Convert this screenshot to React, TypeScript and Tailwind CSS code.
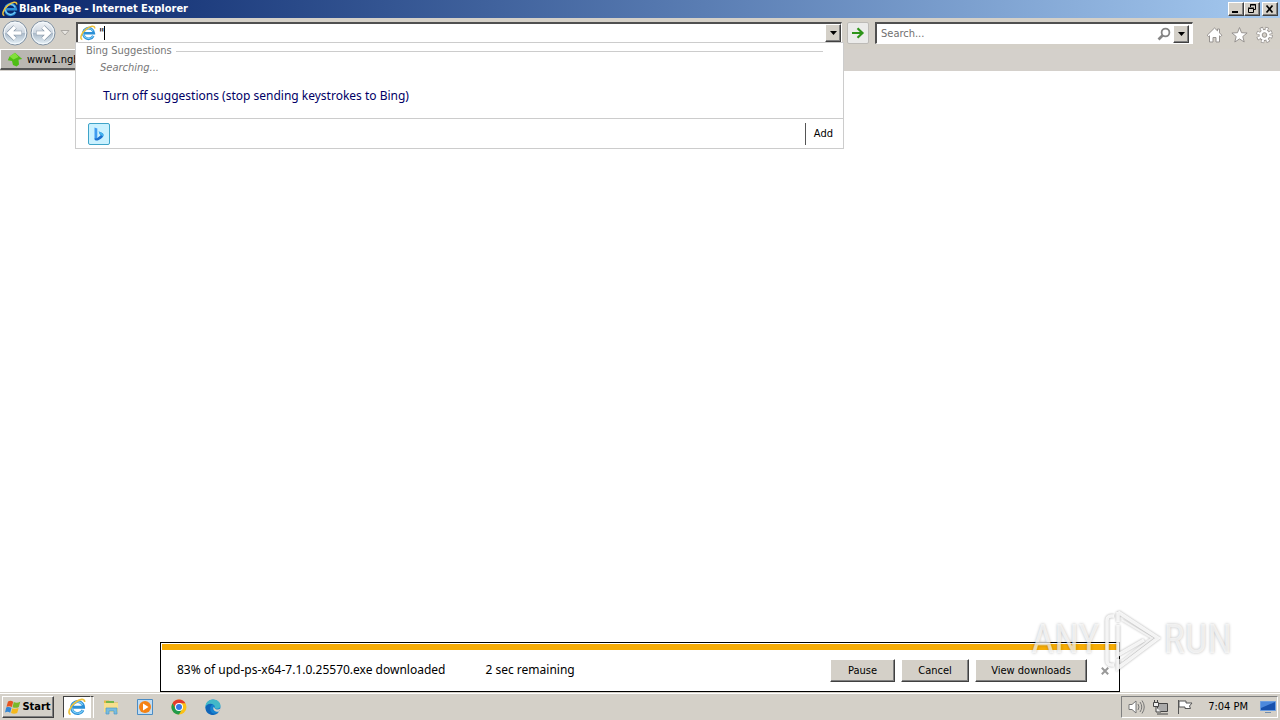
import React from "react";

function IeIcon({ className }: { className: string }) {
  return (
    <svg viewBox="0 0 18 18" className={className} aria-hidden="true">
      <path d="M15 12.200A6 6 0 1 1 15.600 9.300H5.200" fill="none" stroke="#2b8fd6" strokeWidth="2.900" />
      <path d="M14.800 12.400A5.900 5.900 0 0 1 3.900 9.600M4.200 7.600a5.900 5.900 0 0 1 10.600-.6" fill="none" stroke="#7fd0f8" strokeWidth="1.200" />
      <path d="M2.600 16.400C-1 15.600 2 8.500 7 4.600 11.500 1 16.800-.2 16.600 4" fill="none" stroke="#edc13b" strokeWidth="1.700" />
    </svg>
  );
}

function NavCircle({ back }: { back?: boolean }) {
  return (
    <svg viewBox="0 0 26 26" className="size-[26px]" aria-hidden="true">
      <defs>
        <linearGradient id={back ? "nb" : "nf"} x1="0" y1="0" x2="0" y2="1">
          <stop offset="0" stopColor="#f4f6f9" />
          <stop offset=".48" stopColor="#cdd6e0" />
          <stop offset=".52" stopColor="#abbac9" />
          <stop offset="1" stopColor="#eaf5fb" />
        </linearGradient>
      </defs>
      <circle cx="13" cy="13" r="12" fill={back ? "url(#nb)" : "url(#nf)"} stroke="#8393a3" />
      <circle cx="13" cy="13" r="10.800" fill="none" stroke="#f5fafd" strokeWidth="1" />
      <g transform={back ? undefined : "matrix(-1 0 0 1 26 0)"}>
        <path d="M13 7 7 13l6 6M8 13h12" fill="none" stroke="#8494a5" strokeWidth="4.600" strokeLinejoin="round" />
        <path d="M13 7 7 13l6 6M8 13h11.500" fill="none" stroke="#fff" strokeWidth="3.400" />
      </g>
    </svg>
  );
}

function Caret() {
  return (
    <svg viewBox="0 0 7 4" className="h-1 w-[7px]" aria-hidden="true">
      <path d="M0 0h7L3.500 4z" fill="#000" />
    </svg>
  );
}

const raised =
  "flex shrink-0 items-center justify-center border border-t-white border-l-white border-r-[#404040] border-b-[#404040] bg-[#d4d0c8] shadow-[inset_-1px_-1px_0_#808080]";

function TitleBar() {
  return (
    <header className="flex h-[18px] items-center bg-linear-to-r from-[#0a246a] to-[#a6caf0] pr-0.5 pl-0.5">
      <IeIcon className="size-4" />
      <h1 className="ml-px flex-1 text-[11px] leading-[16px] font-bold text-white">Blank Page - Internet Explorer</h1>
      <div className="flex">
        <button aria-label="Minimize" className={`${raised} h-3.5 w-4`}>
          <svg viewBox="0 0 12 10" className="h-2.5 w-3"><path d="M2 7h6v2H2z" /></svg>
        </button>
        <button aria-label="Restore" className={`${raised} h-3.5 w-4`}>
          <svg viewBox="0 0 12 10" className="h-2.5 w-3">
            <path d="M4.500 3V.5h5v5H8M4 1h6M2.500 4.500h5v4h-5zM2 4h6" fill="none" stroke="#000" />
          </svg>
        </button>
        <button aria-label="Close" className={`${raised} ml-0.5 h-3.5 w-4`}>
          <svg viewBox="0 0 12 10" className="h-2.5 w-3"><path d="m2.500 1.500 6 7m0-7-6 7" stroke="#000" strokeWidth="1.700" /></svg>
        </button>
      </div>
    </header>
  );
}

function Suggestions() {
  return (
    <div className="absolute top-5 -right-0.5 -left-px z-10 border border-[#ccc] bg-white">
      <div className="flex h-[17px] items-center gap-1 pr-5 pl-2.5 text-[11px] text-[#777]">
        <span>Bing Suggestions</span>
        <span className="h-px flex-1 bg-[#ccc]" />
      </div>
      <p className="pl-6 text-[11px] leading-[16px] text-[#777] italic">Searching...</p>
      <a href="#suggestions" className="mt-[11px] mb-[13px] ml-[27px] block font-['Noto_Sans',sans-serif] text-[12px] leading-[18px] text-[#000066]">
        Turn off suggestions (stop sending keystrokes to Bing)
      </a>
      <div className="flex h-[30px] items-center border-t border-[#ccc] pl-3">
        <button aria-label="Bing" className="flex size-[22px] items-center justify-center rounded-xs border border-[#3fa4c9] bg-[#caf1ff]">
          <svg viewBox="0 0 16 16" className="size-4">
            <path d="M3.500 1.500 6.300 2.500v9.500l-2.800 1.500z" fill="#3f9bf0" />
            <path d="M3.500 12.500c0 2.200 2.200 2.500 4.300 1.400 3.400-1.700 4.700-2.900 4.700-4.900 0-1.700-2-2.600-4.800-3.500L8.800 8.300l.9.900-3.400 2.800z" fill="#1b70d0" />
            <path d="M7.700 5.500c2.800.9 4.800 1.800 4.800 3.500 0 .6-.2 1.200-.5 1.600L8.800 8.300z" fill="#42b4f0" />
          </svg>
        </button>
        <button className="ml-auto h-[22px] border-l border-[#555] pt-0.5 pr-2.5 pl-2 text-[11px]">Add</button>
      </div>
    </div>
  );
}

const field = "flex items-center border-t-2 border-l-2 border-[#505050] border-r border-b border-r-white border-b-white bg-white";

function NavBar() {
  return (
    <div className="flex h-[31px] items-start bg-[#d4d0c8] pr-[7px]">
      <div className="flex w-[76px] shrink-0 items-center gap-0.5 pt-0.5 pl-0.5">
        <button aria-label="Back"><NavCircle back /></button>
        <button aria-label="Forward"><NavCircle /></button>
        <button aria-label="Recent pages" className="ml-0.5">
          <svg viewBox="0 0 10 6" className="h-1.5 w-2.5"><path d="M1 .5h8L5 5z" fill="#e8e6e2" stroke="#aaa7a2" /></svg>
        </button>
      </div>
      <div className="relative mt-1 min-w-0 flex-1">
        <div className={`${field} h-[21px]`}>
          <IeIcon className="ml-0.5 size-4 shrink-0" />
          <input aria-label="Address" defaultValue={'"'} className="ml-[3px] w-[5px] bg-transparent text-[13px] outline-none" />
          <span className="h-3.5 w-px bg-black" />
          <button aria-label="Show address list" className={`${raised} ml-auto h-[18px] w-4`}><Caret /></button>
        </div>
        <Suggestions />
      </div>
      <button aria-label="Go" className="mt-1 ml-[5px] flex size-[22px] shrink-0 items-center justify-center rounded-xs border border-[#bdbbb7] bg-[#ebebea]">
        <svg viewBox="0 0 14 12" className="h-3 w-3.5"><path d="M1 6h10M6.500 1.200 11.500 6l-5 4.800" fill="none" stroke="#2d9419" strokeWidth="2.200" /></svg>
      </button>
      <div className={`${field} mt-1 ml-1.5 h-[22px] w-[318px] shrink-0 pr-[3px]`}>
        <input aria-label="Search" placeholder="Search..." className="ml-1 min-w-0 flex-1 pt-0.5 text-[11px] outline-none placeholder:text-[#707070]" />
        <button aria-label="Search the web">
          <svg viewBox="0 0 14 14" className="size-3.5"><path d="m1.500 12.500 4-4" stroke="#858585" strokeWidth="2.600" /><circle cx="8.500" cy="5.500" r="3.900" fill="#fff" stroke="#858585" strokeWidth="1.800" /></svg>
        </button>
        <button aria-label="Search providers" className={`${raised} ml-0.5 h-[18px] w-4`}><Caret /></button>
      </div>
      <div className="mt-2 ml-[13px] flex shrink-0 gap-2">
        <button aria-label="Home">
          <svg viewBox="0 0 17 18" className="h-[18px] w-[17px]"><path d="M8.500 2 1.200 9.200l1.300 1.400 1-.8V16H7v-4.500h3V16h3.500V9.800l1 .8 1.300-1.400-2.300-2.300V3h-2v1.900z" fill="#fff" stroke="#979390" /></svg>
        </button>
        <button aria-label="Favorites">
          <svg viewBox="0 0 17 18" className="h-[18px] w-[17px]"><path d="m8.500 1.500 2 5.200 5.600.3-4.300 3.500 1.400 5.500-4.700-3.100L3.800 16l1.400-5.500L.9 7l5.600-.3z" fill="#fff" stroke="#979390" /></svg>
        </button>
        <button aria-label="Tools">
          <svg viewBox="0 0 17 18" className="h-[18px] w-[17px]">
            <circle cx="8.500" cy="9" r="6.200" fill="none" stroke="#979390" strokeWidth="4.200" strokeDasharray="2.870 2" />
            <circle cx="8.500" cy="9" r="5.900" fill="#979390" />
            <circle cx="8.500" cy="9" r="6" fill="none" stroke="#fff" strokeWidth="3" strokeDasharray="1.900 2.812" strokeDashoffset="-.450" />
            <circle cx="8.500" cy="9" r="5" fill="#fff" />
            <circle cx="8.500" cy="9" r="2.300" fill="#d4d0c8" stroke="#979390" />
          </svg>
        </button>
      </div>
    </div>
  );
}

function TabRow() {
  return (
    <nav className="flex h-[22px] items-start bg-[#d4d0cb]">
      <button className="flex h-[21px] w-[200px] items-center border-t border-b-2 border-l border-t-white border-b-[#555] border-l-white bg-[#bab7b2] pt-0.5 pl-1.5 text-[11px]">
        <svg viewBox="0 0 16 16" className="mr-1 size-4"><path d="M8 .8 15.200 7l-3.700.8.5 4.700-2.500 2L6 13 5 9 .8 8.200 2.500 4.500z" fill="#4fbd16" /><path d="m8 .8 3.500 4.200-5 2.500-4-3z" fill="#83df3b" /></svg>
        www1.ngbdv
      </button>
    </nav>
  );
}

function DownloadBar() {
  return (
    <section aria-label="Download" className="mx-auto w-3/4 border border-black bg-white">
      <div className="mx-px mt-px h-1.5 bg-[#f6ac05]" />
      <div className="flex h-[41px] items-center pr-2.5 pl-4 font-['Noto_Sans',sans-serif] text-[12px]">
        <span className="pb-0.5">83% of upd-ps-x64-7.1.0.25570.exe downloaded</span>
        <span className="ml-10 pb-0.5">2 sec remaining</span>
        <div className="ml-auto flex items-center gap-1.5 font-['DejaVu_Sans_Condensed','Noto_Sans',sans-serif] text-[11px]">
          <button className={`${raised} h-[23px] w-[65px] pt-0.5`}>Pause</button>
          <button className={`${raised} h-[23px] w-[68px] pt-0.5`}>Cancel</button>
          <button className={`${raised} h-[23px] w-28 pt-0.5`}>View downloads</button>
          <button aria-label="Dismiss" className="ml-2">
            <svg viewBox="0 0 8 8" className="size-2"><path d="m.8.8 6.400 6.400m0-6.400L.8 7.200" stroke="#999" strokeWidth="2" /></svg>
          </button>
        </div>
      </div>
    </section>
  );
}

function WatermarkWord({ text }: { text: string }) {
  return <span className="font-['Roboto_Condensed',Roboto,sans-serif] text-[40px]">{text}</span>;
}

function Watermark() {
  return (
    <div aria-label="ANY RUN" className="absolute right-12 bottom-5 flex h-[64px] items-center gap-0.5 leading-[64px] text-white/70 [text-shadow:0_0_3px_#0004]">
      <WatermarkWord text="ANY" />
      <svg viewBox="0 0 60 64" className="h-16 w-[60px] drop-shadow-[0_0_1px_#0006]">
        <path d="M16 4v10M16 4l40 26L16 60v-9M16 17v30l26-15" fill="none" stroke="#fff" strokeOpacity=".85" strokeWidth="3.500" />
        <path d="m20 12 30 18-30 23" fill="none" stroke="#fff" strokeOpacity=".7" strokeWidth="2" />
        <path d="M12 8H9a4 4 0 0 0-4 4v41a4 4 0 0 0 4 4h3" fill="none" stroke="#fff" strokeOpacity=".85" strokeWidth="3.500" />
      </svg>
      <WatermarkWord text="RUN" />
    </div>
  );
}

function Taskbar() {
  return (
    <footer className="flex h-7 items-center border-t border-[#d4d0c8] bg-[#d4d0c8] pr-0.5 pl-0.5 shadow-[inset_0_1px_0_#fff]">
      <button className={`${raised} h-[22px] w-[52px] gap-px text-[11px] font-bold`}>
        <svg viewBox="0 0 16 16" className="size-4">
          <path d="M3 2.500c2-1.200 3.500-1 5.200.2L6.900 8C5 7 3.600 7 1.500 7.700z" fill="#e65420" />
          <path d="M8.800 3c2 1.200 4 1 6.500-.2L13.800 8c-2 1.200-4.300 1-6.300.2z" fill="#79b828" />
          <path d="M1.200 8.500c2-.8 3.500-.6 5.300.3l-1.300 5c-1.700-1.200-3-1.300-5.200-.4z" fill="#3387d5" />
          <path d="M7.300 9.200c2 .9 4 .8 6.300-.1l-1.400 5c-2 1-4.200 1-6.200 0z" fill="#f5b81b" />
        </svg>
        <span className="pt-0.5">Start</span>
      </button>
      <div className="ml-[9px] flex items-center">
        <button aria-label="Internet Explorer" className="flex h-[22px] w-7 items-center justify-center border border-t-[#404040] border-l-[#404040] border-r-white border-b-white bg-white">
          <IeIcon className="size-[18px]" />
        </button>
        <span className="h-[22px] w-[3px] border-t border-r border-[#404040] border-r-white" />
        <button aria-label="File Explorer" className="ml-2">
          <svg viewBox="0 0 18 18" className="size-[18px]"><path d="M2 2.500h5l1 2h8V14H2z" fill="#e7b944" /><path d="M2 5h14v9H2z" fill="#f8df8d" /><path d="M4 3h8v2H4z" fill="#75b64b" /><path d="M4 16v-6h11v6h-3v-3H7v3z" fill="#78bce0" stroke="#4d9bc6" strokeWidth=".7" /></svg>
        </button>
        <button aria-label="Media Player" className="ml-4">
          <svg viewBox="0 0 18 18" className="size-[18px]"><path d="M1.500 1.500h15v15h-15z" fill="#c3dcf0" stroke="#4a8cc5" /><circle cx="9" cy="9" r="6" fill="#f58212" /><path d="M7 5.500v7L12.500 9z" fill="#fff" /></svg>
        </button>
        <button aria-label="Chrome" className="ml-4">
          <svg viewBox="0 0 18 18" className="size-[18px]"><circle cx="9" cy="9" r="7.500" fill="#fbc116" /><path d="M2.500 5.200A7.500 7.500 0 0 1 15.500 5.300H9L5.700 11z" fill="#e33b2e" /><path d="M2.500 5.200A7.500 7.500 0 0 0 9 16.500L12.200 11H5.700z" fill="#219b4b" /><circle cx="9" cy="9" r="4" fill="#fff" /><circle cx="9" cy="9" r="3" fill="#3477e8" /></svg>
        </button>
        <button aria-label="Edge" className="ml-4">
          <svg viewBox="0 0 18 18" className="size-[18px]"><circle cx="9" cy="9" r="7.500" fill="#1683d0" /><path d="M1.500 9C1 5 5 1.500 9 1.500c4.500 0 7.500 3 7.500 6 0 3-4 4.200-6 2.500 1-1.500.2-3.500-2.500-4-3-.5-6 1-6.500 3z" fill="#42b8c8" /><path d="M1.500 9C3 5.800 7 5 9 6.500c-3 1-4 5-1 8.500 2 1 4.500.8 6.800-.8A7.500 7.500 0 0 1 1.500 9z" fill="#1065b8" /><path d="M10.500 10c1.500 2 4 2 6 .5-.3 1.200-1 2.500-2 3.300C11 14 8.500 12 9.500 9z" fill="#d4d0c8" /></svg>
        </button>
      </div>
      <div className="ml-auto flex h-[22px] items-center border border-t-[#808080] border-l-[#808080] border-r-white border-b-white pr-px pl-1.5 text-[11px]">
        <svg viewBox="0 0 18 16" className="h-4 w-[18px]"><path d="M1 5.500h3l4-3.500v12l-4-3.500H1z" fill="#fff" stroke="#777" /><path d="M10 5q2 3 0 6m2-8q3.500 5 0 10m2-11.500q4.500 6.500 0 13" fill="none" stroke="#777" /></svg>
        <svg viewBox="0 0 18 16" className="ml-1.5 h-4 w-[18px]"><path d="M5.500 4.500h10v8h-10zM5 15h11" fill="#aaa" stroke="#444" /><path d="M1.500 3.500h5v4h-5zM2.500 1v2m3-2v2M4 8v5h5" fill="#eee" stroke="#444" /></svg>
        <svg viewBox="0 0 18 16" className="ml-1.5 h-4 w-[18px]"><path d="M2.500 1v14M3 2h7v2h6l-2.500 3 1 2.500H9V8H3z" fill="#fff" stroke="#555" /></svg>
        <time className="ml-3.5 pt-0.5">7:04 PM</time>
        <svg viewBox="0 0 16 14" className="ml-3 h-3.5 w-4"><path d="M.5 1.500h15v9H.5z" fill="#1851ad" stroke="#6b9de0" /><path d="M1 2h14L1 8z" fill="#4c88dc" /><path d="M5 12h6v1H5z" fill="#718dad" /></svg>
      </div>
    </footer>
  );
}

export default function App() {
  return (
    <div className="flex min-h-screen flex-col bg-white font-['DejaVu_Sans_Condensed','Noto_Sans',sans-serif] text-black">
      <TitleBar />
      <NavBar />
      <TabRow />
      <main className="relative flex flex-1 flex-col justify-end">
        <DownloadBar />
        <Watermark />
      </main>
      <Taskbar />
    </div>
  );
}
